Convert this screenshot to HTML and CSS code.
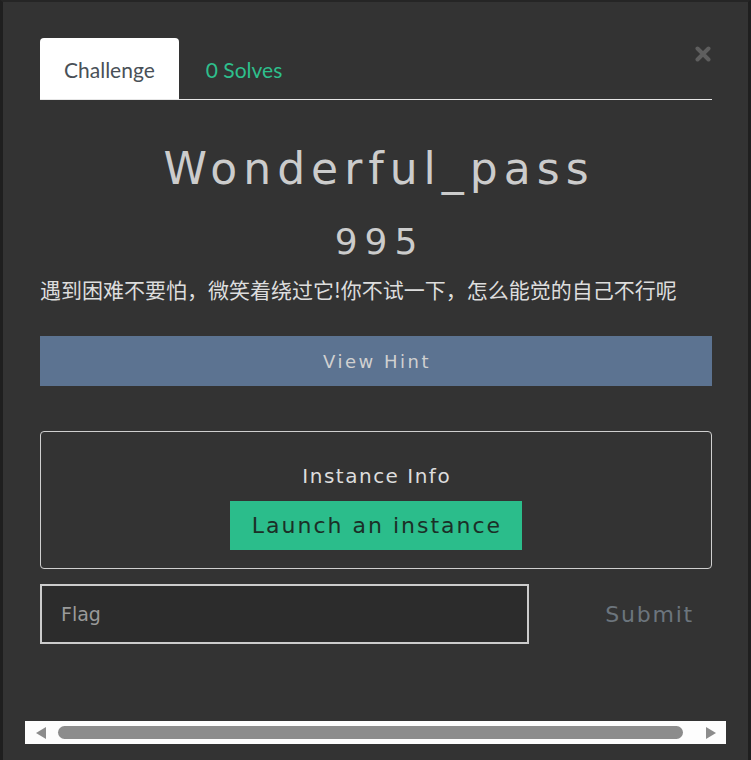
FILE: index.html
```html
<!DOCTYPE html>
<html>
<head>
<meta charset="utf-8">
<link rel="stylesheet" href="styles.css">
</head>
<body>
<div class="frame">
  <div class="tabs">
    <div class="tab active">Challenge</div>
    <div class="tab solves">0 Solves</div>
    <svg class="close" width="16" height="16" viewBox="0 0 16 16"><path d="M2.5 2.5 L13.5 13.5 M13.5 2.5 L2.5 13.5" stroke="#5e5e5e" stroke-width="4" stroke-linecap="round"/></svg>
  </div>
  <h1 class="title">Wonderful_pass</h1>
  <div class="points">995</div>
  <p class="desc">遇到困难不要怕，微笑着绕过它!你不试一下，怎么能觉的自己不行呢</p>
  <div class="hint">View Hint</div>
  <div class="instance">
    <div class="instance-title">Instance Info</div>
    <div class="launch">Launch an instance</div>
  </div>
  <div class="flag-row">
    <div class="flag">Flag</div>
    <div class="submit">Submit</div>
  </div>
  <div class="scrollbar">
    <span class="arrow left"></span>
    <span class="thumb"></span>
    <span class="arrow right"></span>
  </div>
</div>
</body>
</html>
```
FILE: styles.css
```css
html, body {
  margin: 0;
  padding: 0;
  background: #333333;
}
.frame {
  box-sizing: border-box;
  height: 760px;
  width: 751px;
  background: #333333;
  border-top: 2px solid #252525;
  border-left: 3px solid #1f1f1f;
  border-right: 3px solid #1f1f1f;
  padding: 36px 36px 0 37px;
  display: flex;
  flex-direction: column;
}
.tabs {
  position: relative;
  display: flex;
  border-bottom: 1px solid #e6e6e6;
  height: 61px;
}
.tab {
  font-family: Lato, "Liberation Sans", sans-serif;
  font-size: 21px;
  display: flex;
  align-items: center;
  padding: 0 24px;
  height: 61px;
  box-sizing: border-box;
  padding-top: 1px;
}
.tab.active {
  background: #ffffff;
  color: #495057;
  border-radius: 4px 4px 0 0;
}
.tab.solves {
  color: #2ebf8c;
  padding-left: 27px;
}
.close {
  position: absolute;
  right: 1px;
  top: 8px;
}
.title {
  font-family: "DejaVu Sans", sans-serif;
  font-weight: normal;
  font-size: 44px;
  letter-spacing: 6px;
  padding-left: 6px;
  color: #cccccc;
  text-align: center;
  margin: 43px 0 0 0;
  line-height: 52px;
}
.points {
  font-family: "DejaVu Sans", sans-serif;
  font-size: 36px;
  letter-spacing: 7px;
  padding-left: 7px;
  color: #cccccc;
  text-align: center;
  line-height: 44px;
  margin-top: 25px;
}
.desc {
  font-family: "Noto Sans CJK SC", sans-serif;
  font-size: 21px;
  color: #dddddd;
  margin: 10px 0 0 0;
  line-height: 30px;
}
.hint {
  margin-top: 32px;
  height: 50px;
  background: #5c7391;
  color: #d0d0d0;
  font-family: "DejaVu Sans", sans-serif;
  font-size: 18px;
  letter-spacing: 2.5px;
  padding-left: 2px;
  display: flex;
  align-items: center;
  justify-content: center;
}
.instance {
  margin-top: 45px;
  height: 138px;
  box-sizing: border-box;
  border: 1px solid #cfcfcf;
  border-radius: 4px;
  display: flex;
  flex-direction: column;
  align-items: center;
  padding-top: 31px;
}
.instance-title {
  font-family: "DejaVu Sans", sans-serif;
  font-size: 20px;
  letter-spacing: 1.5px;
  padding-left: 1.5px;
  color: #dddddd;
  line-height: 26px;
}
.launch {
  margin-top: 12px;
  width: 292px;
  height: 49px;
  background: #2bbd8b;
  color: #1b2f27;
  font-family: "DejaVu Sans", sans-serif;
  font-size: 22px;
  letter-spacing: 2px;
  padding-left: 2px;
  box-sizing: border-box;
  display: flex;
  align-items: center;
  justify-content: center;
}
.flag-row {
  margin-top: 15px;
  display: flex;
  align-items: center;
  height: 60px;
}
.flag {
  box-sizing: border-box;
  width: 489px;
  height: 60px;
  border: 2px solid #cccccc;
  background: #2c2c2c;
  color: #9a9a9a;
  font-family: "DejaVu Sans", sans-serif;
  font-size: 19px;
  display: flex;
  align-items: center;
  padding-left: 19px;
}
.submit {
  flex: 1;
  text-align: right;
  padding-right: 18px;
  color: #6c757d;
  font-family: "DejaVu Sans", sans-serif;
  font-size: 22px;
  letter-spacing: 1.8px;
}
.scrollbar {
  margin-top: 77px;
  margin-left: -15px;
  width: 701px;
  height: 23px;
  background: #fdfdfd;
  display: flex;
  align-items: center;
  box-sizing: border-box;
  padding: 0 10px 0 11px;
}
.arrow {
  width: 0;
  height: 0;
  border-top: 6px solid transparent;
  border-bottom: 6px solid transparent;
}
.arrow.left {
  border-right: 10px solid #8c8c8c;
}
.arrow.right {
  border-left: 10px solid #8c8c8c;
}
.thumb {
  flex: 1;
  height: 13px;
  border-radius: 7px;
  background: #8c8c8c;
  margin: 0 23px 0 12px;
}
```
